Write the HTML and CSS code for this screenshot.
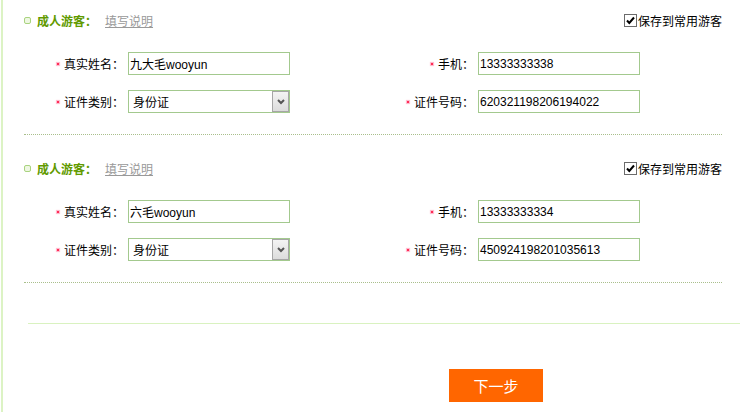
FILE: index.html
```html
<!DOCTYPE html>
<html lang="zh-CN">
<head>
<meta charset="utf-8">
<title>成人游客</title>
<link rel="stylesheet" href="styles.css">
</head>
<body>
<div class="page">
  <div class="section first">
    <div class="head">
      <div class="title">
        <span class="bullet"></span>
        <span class="name">成人游客：</span>
        <a class="help" href="#">填写说明</a>
      </div>
      <label class="save">
        <span class="box"><svg viewBox="0 0 11 11" width="11" height="11"><path d="M2 5.5 L4.3 8 L9 2.5" fill="none" stroke="#000" stroke-width="2"/></svg></span>保存到常用游客
      </label>
    </div>
    <div class="grid">
      <span class="lbl">真实姓名：</span>
      <span class="field">九大毛wooyun</span>
      <span class="lbl">手机：</span>
      <span class="field">13333333338</span>
      <span class="lbl">证件类别：</span>
      <span class="field select"><span class="val">身份证</span><span class="arrow"><svg viewBox="0 0 8 6" width="8" height="6"><path d="M1 1 L4 4 L7 1" fill="none" stroke="#555" stroke-width="2"/></svg></span></span>
      <span class="lbl">证件号码：</span>
      <span class="field">620321198206194022</span>
    </div>
  </div>
  <div class="section">
    <div class="head">
      <div class="title">
        <span class="bullet"></span>
        <span class="name">成人游客：</span>
        <a class="help" href="#">填写说明</a>
      </div>
      <label class="save">
        <span class="box"><svg viewBox="0 0 11 11" width="11" height="11"><path d="M2 5.5 L4.3 8 L9 2.5" fill="none" stroke="#000" stroke-width="2"/></svg></span>保存到常用游客
      </label>
    </div>
    <div class="grid">
      <span class="lbl">真实姓名：</span>
      <span class="field">六毛wooyun</span>
      <span class="lbl">手机：</span>
      <span class="field">13333333334</span>
      <span class="lbl">证件类别：</span>
      <span class="field select"><span class="val">身份证</span><span class="arrow"><svg viewBox="0 0 8 6" width="8" height="6"><path d="M1 1 L4 4 L7 1" fill="none" stroke="#555" stroke-width="2"/></svg></span></span>
      <span class="lbl">证件号码：</span>
      <span class="field">450924198201035613</span>
    </div>
  </div>
  <div class="footer">
    <button class="next" type="button">下一步</button>
  </div>
</div>
</body>
</html>
```

FILE: styles.css
```css
html, body {
  margin: 0;
  padding: 0;
  background: #fff;
  overflow: hidden;
}
body {
  font-family: "Liberation Sans", "Noto Sans CJK SC", sans-serif;
  font-size: 12px;
  color: #000;
}
.page {
  margin-left: 1px;
  border-left: 2px solid #dcf3c4;
  min-height: 412px;
  box-sizing: border-box;
}
.section {
  margin-left: 21px;
  width: 698px;
  padding-top: 21px;
  padding-bottom: 21px;
  border-bottom: 1px dotted #a9bf8c;
}
.section.first {
  padding-top: 8px;
}
.head {
  height: 24px;
  display: flex;
  align-items: center;
  justify-content: space-between;
}
.title {
  display: flex;
  align-items: center;
}
.bullet {
  width: 5px;
  height: 5px;
  border: 1px solid #a9d37f;
  border-radius: 2px;
  background: #eef7e2;
  margin-right: 6px;
}
.name {
  color: #619a00;
  font-weight: bold;
  font-size: 12px;
}
.help {
  margin-left: 8px;
  color: #999;
  text-decoration: underline;
  font-size: 12px;
}
.save {
  display: flex;
  align-items: center;
  color: #000;
  font-size: 12px;
}
.box {
  width: 11px;
  height: 11px;
  border: 1px solid #6b6b6b;
  background: #fff;
  display: flex;
  margin-right: 1px;
}
.grid {
  margin-top: 20px;
  display: grid;
  grid-template-columns: 100px 162px 180px 162px;
  column-gap: 4px;
  row-gap: 15px;
}
.lbl {
  display: flex;
  align-items: center;
  justify-content: flex-end;
  height: 23px;
}
.lbl::before {
  content: "";
  width: 2px;
  height: 2px;
  background: #ff2d55;
  box-shadow: 0 0 1px 1px rgba(255, 80, 130, 0.45);
  margin-right: 5px;
}
.field {
  box-sizing: border-box;
  height: 23px;
  border: 1px solid #a3c98e;
  padding-left: 1px;
  display: flex;
  align-items: center;
  font-size: 12px;
  color: #000;
  background: #fff;
}
.select {
  padding-left: 4px;
  justify-content: space-between;
}
.arrow {
  box-sizing: border-box;
  width: 17px;
  height: 21px;
  border: 1px solid #a6a6a6;
  background: linear-gradient(#f4f4f4, #dcdcdc);
  display: flex;
  align-items: center;
  justify-content: center;
}
.footer {
  margin-left: 25px;
  margin-top: 40px;
  border-top: 1px solid #d9f2c0;
  padding-top: 45px;
  padding-left: 421px;
}
.next {
  width: 94px;
  height: 33px;
  border: none;
  background: #ff6600;
  color: #fff;
  font-family: "Noto Sans CJK SC", sans-serif;
  font-size: 15px;
  padding: 0;
  display: block;
}
```
